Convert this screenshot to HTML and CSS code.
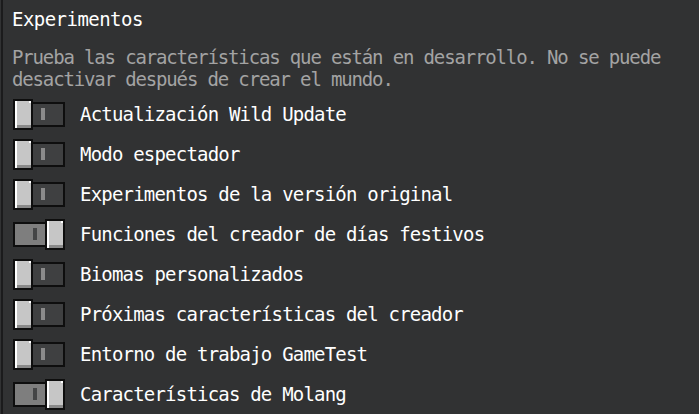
FILE: index.html
```html
<!DOCTYPE html>
<html lang="es">
<head>
<meta charset="utf-8">
<title>Experimentos</title>
<link rel="stylesheet" href="styles.css">
</head>
<body>
<div class="panel">
  <h1 class="title">Experimentos</h1>
  <p class="desc">Prueba las características que están en desarrollo. No se puede desactivar después de crear el mundo.</p>
  <ul class="list">
    <li class="row"><span class="toggle off"><span class="knob"></span><span class="track"><span class="pip"></span></span></span><span class="label">Actualización Wild Update</span></li>
    <li class="row"><span class="toggle off"><span class="knob"></span><span class="track"><span class="pip"></span></span></span><span class="label">Modo espectador</span></li>
    <li class="row"><span class="toggle off"><span class="knob"></span><span class="track"><span class="pip"></span></span></span><span class="label">Experimentos de la versión original</span></li>
    <li class="row"><span class="toggle on"><span class="track"><span class="pip"></span></span><span class="knob"></span></span><span class="label">Funciones del creador de días festivos</span></li>
    <li class="row"><span class="toggle off"><span class="knob"></span><span class="track"><span class="pip"></span></span></span><span class="label">Biomas personalizados</span></li>
    <li class="row"><span class="toggle off"><span class="knob"></span><span class="track"><span class="pip"></span></span></span><span class="label">Próximas características del creador</span></li>
    <li class="row"><span class="toggle off"><span class="knob"></span><span class="track"><span class="pip"></span></span></span><span class="label">Entorno de trabajo GameTest</span></li>
    <li class="row"><span class="toggle on"><span class="track"><span class="pip"></span></span><span class="knob"></span></span><span class="label">Características de Molang</span></li>
  </ul>
</div>
</body>
</html>
```
FILE: styles.css
```css
html, body {
  margin: 0;
  padding: 0;
  background: #313233;
  height: 100%;
  overflow: hidden;
}
body {
  padding-left: 1px;
  font-family: "DejaVu Sans Mono", "Liberation Mono", monospace;
  font-size: 19px;
  line-height: 22px;
  letter-spacing: -0.8px;
}
.panel {
  border-left: 2px solid #1b1b1c;
  min-height: 100%;
  padding: 8px 8px 0 9px;
  box-sizing: border-box;
}
.title {
  margin: 0;
  font-size: 19px;
  font-weight: normal;
  line-height: 22px;
  color: #ffffff;
  letter-spacing: -0.54px;
}
.desc {
  margin: 16px 0 4px 0;
  color: #a3a3a3;
  letter-spacing: -1.15px;
}
.list {
  list-style: none;
  margin: 0;
  padding: 0;
}
.row {
  height: 40px;
  display: flex;
  align-items: center;
}
.toggle {
  display: flex;
  align-items: center;
  width: 52px;
  height: 32px;
  margin-left: 1px;
  margin-right: 15px;
  flex: none;
}
.knob {
  position: relative;
  z-index: 1;
  box-sizing: border-box;
  width: 20px;
  height: 31px;
  border: 2px solid #0e0e0e;
  background: #c6c6c6;
  box-shadow: inset 2px 0 0 #ffffff, inset 0 -3px 0 #8a8a8a;
  flex: none;
}
.knob::before {
  content: "";
  display: block;
  margin-left: auto;
  width: 2px;
  height: 2px;
  background: #ffffff;
}
.track {
  box-sizing: border-box;
  width: 34px;
  height: 25px;
  border: 2px solid #0e0e0e;
  display: flex;
  align-items: center;
  flex: none;
}
.off .track {
  margin-left: -2px;
  background: #3f4041;
  padding-left: 8px;
}
.on .track {
  background: #7e7e7e;
  justify-content: flex-end;
  padding-right: 8px;
}
.on .knob {
  margin-left: -2px;
}
.pip {
  width: 4px;
  height: 12px;
  background: #8b8b8b;
}
.on .pip {
  background: #444546;
}
.label {
  color: #ffffff;
  white-space: nowrap;
}
```
